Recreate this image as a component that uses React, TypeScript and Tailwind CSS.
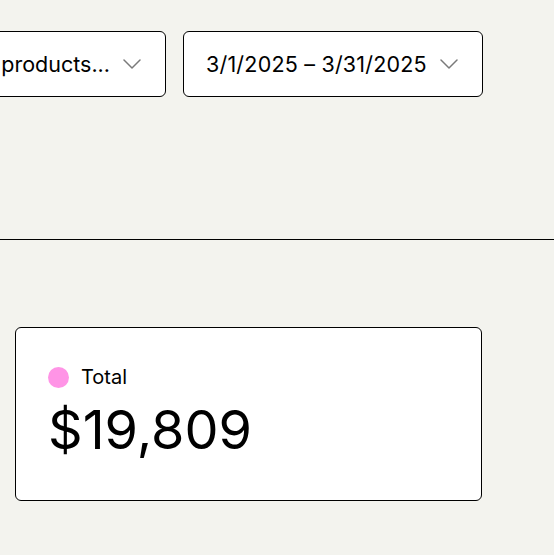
function Chevron() {
  return (
    <svg width="18" height="10" viewBox="0 0 18 10" fill="none" className="shrink-0">
      <path d="M1 1l8 8 8-8" stroke="#7a7a7a" strokeWidth="1.5" strokeLinecap="round" strokeLinejoin="round" />
    </svg>
  )
}

function Select({ label, className = '' }: { label: string; className?: string }) {
  return (
    <button
      className={`flex h-[66px] shrink-0 items-center justify-end gap-[13px] rounded-md border border-black bg-white pl-[22px] pr-[24px] text-[21.5px] tracking-[0.2px] text-black ${className}`}
    >
      <span className="whitespace-nowrap">{label}</span>
      <Chevron />
    </button>
  )
}

export default function App() {
  return (
    <div
      className="h-[555px] w-[554px] overflow-hidden bg-[#f3f3ee]"
      style={{ fontFamily: 'Inter, "Noto Sans", sans-serif' }}
    >
      {/* Filters */}
      <div className="flex items-center gap-[17px] pt-[31px]">
        <Select label="products..." className="ml-[-40px] w-[206px] text-[20.5px] tracking-normal" />
        <Select label="3/1/2025 – 3/31/2025" />
      </div>

      <div className="mt-[142px] border-t border-black" />

      {/* Summary card */}
      <div className="mt-[87px] ml-[15px] flex h-[174px] w-[467px] flex-col rounded-md border border-black bg-white px-[32px] pt-[34px]">
        <div className="flex items-center gap-3">
          <span className="h-[21px] w-[21px] rounded-full bg-[#ff94e6]" />
          <span className="text-[20px] text-black">Total</span>
        </div>
        <div className="mt-[5px] text-[54px] leading-[66px] text-black">$19,809</div>
      </div>
    </div>
  )
}
